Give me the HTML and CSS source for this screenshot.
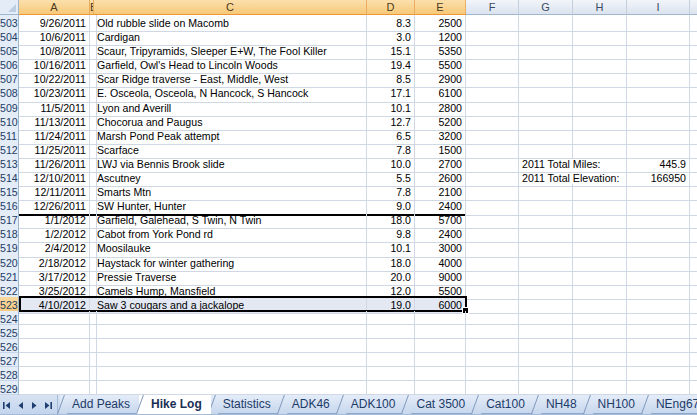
FILE: index.html
```html
<!DOCTYPE html>
<html>
<head>
<meta charset="utf-8">
<link rel="stylesheet" href="styles.css">
</head>
<body>
<div class="sheet">
  <div class="row hdr">
    <div class="c corner"><span class="tri"></span></div>
    <div class="c ch sel">A</div>
    <div class="c ch sel bh">B</div>
    <div class="c ch sel">C</div>
    <div class="c ch sel">D</div>
    <div class="c ch sel">E</div>
    <div class="c ch">F</div>
    <div class="c ch">G</div>
    <div class="c ch">H</div>
    <div class="c ch">I</div>
    <div class="c ch"></div>
  </div>

  <div class="row"><div class="c rh">503</div><div class="c r">9/26/2011</div><div class="c"></div><div class="c">Old rubble slide on Macomb</div><div class="c r">8.3</div><div class="c r">2500</div><div class="c"></div><div class="c"></div><div class="c"></div><div class="c"></div><div class="c"></div></div>
  <div class="row"><div class="c rh">504</div><div class="c r">10/6/2011</div><div class="c"></div><div class="c">Cardigan</div><div class="c r">3.0</div><div class="c r">1200</div><div class="c"></div><div class="c"></div><div class="c"></div><div class="c"></div><div class="c"></div></div>
  <div class="row"><div class="c rh">505</div><div class="c r">10/8/2011</div><div class="c"></div><div class="c">Scaur, Tripyramids, Sleeper E+W, The Fool Killer</div><div class="c r">15.1</div><div class="c r">5350</div><div class="c"></div><div class="c"></div><div class="c"></div><div class="c"></div><div class="c"></div></div>
  <div class="row"><div class="c rh">506</div><div class="c r">10/16/2011</div><div class="c"></div><div class="c">Garfield, Owl's Head to Lincoln Woods</div><div class="c r">19.4</div><div class="c r">5500</div><div class="c"></div><div class="c"></div><div class="c"></div><div class="c"></div><div class="c"></div></div>
  <div class="row"><div class="c rh">507</div><div class="c r">10/22/2011</div><div class="c"></div><div class="c">Scar Ridge traverse - East, Middle, West</div><div class="c r">8.5</div><div class="c r">2900</div><div class="c"></div><div class="c"></div><div class="c"></div><div class="c"></div><div class="c"></div></div>
  <div class="row tall"><div class="c rh">508</div><div class="c r">10/23/2011</div><div class="c"></div><div class="c">E. Osceola, Osceola, N Hancock, S Hancock</div><div class="c r">17.1</div><div class="c r">6100</div><div class="c"></div><div class="c"></div><div class="c"></div><div class="c"></div><div class="c"></div></div>
  <div class="row"><div class="c rh">509</div><div class="c r">11/5/2011</div><div class="c"></div><div class="c">Lyon and Averill</div><div class="c r">10.1</div><div class="c r">2800</div><div class="c"></div><div class="c"></div><div class="c"></div><div class="c"></div><div class="c"></div></div>
  <div class="row"><div class="c rh">510</div><div class="c r">11/13/2011</div><div class="c"></div><div class="c">Chocorua and Paugus</div><div class="c r">12.7</div><div class="c r">5200</div><div class="c"></div><div class="c"></div><div class="c"></div><div class="c"></div><div class="c"></div></div>
  <div class="row"><div class="c rh">511</div><div class="c r">11/24/2011</div><div class="c"></div><div class="c">Marsh Pond Peak attempt</div><div class="c r">6.5</div><div class="c r">3200</div><div class="c"></div><div class="c"></div><div class="c"></div><div class="c"></div><div class="c"></div></div>
  <div class="row"><div class="c rh">512</div><div class="c r">11/25/2011</div><div class="c"></div><div class="c">Scarface</div><div class="c r">7.8</div><div class="c r">1500</div><div class="c"></div><div class="c"></div><div class="c"></div><div class="c"></div><div class="c"></div></div>
  <div class="row"><div class="c rh">513</div><div class="c r">11/26/2011</div><div class="c"></div><div class="c">LWJ via Bennis Brook slide</div><div class="c r">10.0</div><div class="c r">2700</div><div class="c"></div><div class="c spill">2011 Total Miles:</div><div class="c"></div><div class="c r">445.9</div><div class="c"></div></div>
  <div class="row"><div class="c rh">514</div><div class="c r">12/10/2011</div><div class="c"></div><div class="c">Ascutney</div><div class="c r">5.5</div><div class="c r">2600</div><div class="c"></div><div class="c spill">2011 Total Elevation:</div><div class="c"></div><div class="c r">166950</div><div class="c"></div></div>
  <div class="row"><div class="c rh">515</div><div class="c r">12/11/2011</div><div class="c"></div><div class="c">Smarts Mtn</div><div class="c r">7.8</div><div class="c r">2100</div><div class="c"></div><div class="c"></div><div class="c"></div><div class="c"></div><div class="c"></div></div>
  <div class="row"><div class="c rh">516</div><div class="c r thick">12/26/2011</div><div class="c thick"></div><div class="c thick">SW Hunter, Hunter</div><div class="c r thick">9.0</div><div class="c r thick">2400</div><div class="c"></div><div class="c"></div><div class="c"></div><div class="c"></div><div class="c"></div></div>
  <div class="row"><div class="c rh">517</div><div class="c r">1/1/2012</div><div class="c"></div><div class="c">Garfield, Galehead, S Twin, N Twin</div><div class="c r">18.0</div><div class="c r">5700</div><div class="c"></div><div class="c"></div><div class="c"></div><div class="c"></div><div class="c"></div></div>
  <div class="row"><div class="c rh">518</div><div class="c r">1/2/2012</div><div class="c"></div><div class="c">Cabot from York Pond rd</div><div class="c r">9.8</div><div class="c r">2400</div><div class="c"></div><div class="c"></div><div class="c"></div><div class="c"></div><div class="c"></div></div>
  <div class="row tall"><div class="c rh">519</div><div class="c r">2/4/2012</div><div class="c"></div><div class="c">Moosilauke</div><div class="c r">10.1</div><div class="c r">3000</div><div class="c"></div><div class="c"></div><div class="c"></div><div class="c"></div><div class="c"></div></div>
  <div class="row"><div class="c rh">520</div><div class="c r">2/18/2012</div><div class="c"></div><div class="c">Haystack for winter gathering</div><div class="c r">18.0</div><div class="c r">4000</div><div class="c"></div><div class="c"></div><div class="c"></div><div class="c"></div><div class="c"></div></div>
  <div class="row"><div class="c rh">521</div><div class="c r">3/17/2012</div><div class="c"></div><div class="c">Pressie Traverse</div><div class="c r">20.0</div><div class="c r">9000</div><div class="c"></div><div class="c"></div><div class="c"></div><div class="c"></div><div class="c"></div></div>
  <div class="row"><div class="c rh">522</div><div class="c r">3/25/2012</div><div class="c"></div><div class="c">Camels Hump, Mansfield</div><div class="c r">12.0</div><div class="c r">5500</div><div class="c"></div><div class="c"></div><div class="c"></div><div class="c"></div><div class="c"></div></div>
  <div class="row active"><div class="c rh sel">523</div><div class="c r hl">4/10/2012</div><div class="c hl"></div><div class="c hl">Saw 3 cougars and a jackalope</div><div class="c r hl">19.0</div><div class="c r hl">6000</div><div class="c"></div><div class="c"></div><div class="c"></div><div class="c"></div><div class="c"></div><div class="selection"><span class="handle"></span></div></div>
  <div class="row"><div class="c rh">524</div><div class="c"></div><div class="c"></div><div class="c"></div><div class="c"></div><div class="c"></div><div class="c"></div><div class="c"></div><div class="c"></div><div class="c"></div><div class="c"></div></div>
  <div class="row"><div class="c rh">525</div><div class="c"></div><div class="c"></div><div class="c"></div><div class="c"></div><div class="c"></div><div class="c"></div><div class="c"></div><div class="c"></div><div class="c"></div><div class="c"></div></div>
  <div class="row"><div class="c rh">526</div><div class="c"></div><div class="c"></div><div class="c"></div><div class="c"></div><div class="c"></div><div class="c"></div><div class="c"></div><div class="c"></div><div class="c"></div><div class="c"></div></div>
  <div class="row"><div class="c rh">527</div><div class="c"></div><div class="c"></div><div class="c"></div><div class="c"></div><div class="c"></div><div class="c"></div><div class="c"></div><div class="c"></div><div class="c"></div><div class="c"></div></div>
  <div class="row"><div class="c rh">528</div><div class="c"></div><div class="c"></div><div class="c"></div><div class="c"></div><div class="c"></div><div class="c"></div><div class="c"></div><div class="c"></div><div class="c"></div><div class="c"></div></div>
  <div class="row"><div class="c rh">529</div><div class="c"></div><div class="c"></div><div class="c"></div><div class="c"></div><div class="c"></div><div class="c"></div><div class="c"></div><div class="c"></div><div class="c"></div><div class="c"></div></div>
</div>

<div class="tabbar">
  <div class="nav">
    <svg class="nb" width="8" height="7" viewBox="0 0 8 7"><rect x="0" y="0" width="1.6" height="7" fill="#1f3f72"/><path d="M7 0 L2.5 3.5 L7 7 Z" fill="#1f3f72"/></svg>
    <svg class="nb" width="6" height="7" viewBox="0 0 6 7"><path d="M5 0 L0.5 3.5 L5 7 Z" fill="#1f3f72"/></svg>
    <svg class="nb" width="6" height="7" viewBox="0 0 6 7"><path d="M1 0 L5.5 3.5 L1 7 Z" fill="#1f3f72"/></svg>
    <svg class="nb" width="8" height="7" viewBox="0 0 8 7"><path d="M1 0 L5.5 3.5 L1 7 Z" fill="#1f3f72"/><rect x="6.4" y="0" width="1.6" height="7" fill="#1f3f72"/></svg>
  </div>
  <div class="tabs">
    <div class="tab">Add Peaks</div>
    <div class="tab active">Hike Log</div>
    <div class="tab">Statistics</div>
    <div class="tab">ADK46</div>
    <div class="tab">ADK100</div>
    <div class="tab">Cat 3500</div>
    <div class="tab">Cat100</div>
    <div class="tab">NH48</div>
    <div class="tab">NH100</div>
    <div class="tab">NEng67</div>
  </div>
</div>
</body>
</html>
```
FILE: styles.css
```css
html, body {
  margin: 0;
  padding: 0;
}
body {
  width: 697px;
  height: 415px;
  overflow: hidden;
  background: #fff;
  font-family: "Liberation Sans", Arial, sans-serif;
  color: #000;
}
.sheet {
  display: flex;
  flex-direction: column;
}
.row {
  display: grid;
  grid-template-columns: 19px 71px 4px 273px 48px 51px 53px 54px 54px 63px 60px;
  height: 14px;
  position: relative;
}
.row.tall { height: 15px; }
.row.hdr { height: 15px; }
.c {
  box-sizing: border-box;
  border-right: 1px solid #d0d7e5;
  border-bottom: 1px solid #d0d7e5;
  font-size: 10.6px;
  line-height: 16px;
  padding: 0 3px;
  white-space: nowrap;
  min-width: 0;
}
.row.tall .c { line-height: 17px; }
.r { text-align: right; }
.rh {
  background: #e4ecf7;
  color: #233d66;
  text-align: right;
  padding: 0 1px 0 0;
  border-right: 1px solid #9eb6ce;
  border-bottom: 1px solid #c5d5ea;
  overflow: hidden;
}
.rh.sel {
  background: linear-gradient(#fad9a0, #f7c877);
  border-bottom-color: #f0b560;
}
.corner {
  background: #e4ecf7;
  border-right: 1px solid #9eb6ce;
  border-bottom: 1px solid #9eb6ce;
  position: relative;
}
.tri {
  position: absolute;
  right: 2px;
  bottom: 2px;
  width: 0;
  height: 0;
  border-left: 8px solid transparent;
  border-bottom: 8px solid #bccde3;
}
.ch {
  background: linear-gradient(#f2f5fa, #dbe3ee);
  color: #3b4b63;
  text-align: center;
  font-size: 11px;
  line-height: 15px;
  border-right: 1px solid #c2cfdf;
  border-bottom: 1px solid #9eb6ce;
  padding: 0;
  overflow: hidden;
}
.ch.sel {
  background: linear-gradient(#fbe0ad, #f7c978);
  color: #4a3a20;
  border-right-color: #e9ad5f;
  border-bottom-color: #f29536;
}
.bh {
  text-align: left;
}
.spill {
  border-right-color: transparent;
  padding-left: 3px;
}
.thick {
  border-bottom: 2px solid #000;
}
.hl {
  background: #e3e8f3;
}
.selection {
  position: absolute;
  left: 19px;
  top: -1px;
  width: 448px;
  height: 16px;
  box-sizing: border-box;
  border: 2px solid #000;
  pointer-events: none;
}
.handle {
  position: absolute;
  right: -4px;
  bottom: -4px;
  width: 5px;
  height: 5px;
  background: #000;
  border: 1px solid #fff;
}

.tabbar {
  height: 20px;
  display: flex;
  background: linear-gradient(#d7e3f3, #c2d4ec);
  border-bottom: 1px solid #a3bbd9;
  box-sizing: border-box;
  overflow: hidden;
}
.nav {
  width: 58px;
  flex: none;
  display: flex;
  align-items: center;
  gap: 7px;
  padding-left: 3px;
  box-sizing: border-box;
  border-right: 1px solid #a6bbd6;
}
.nb { display: block; margin-top: 2px; }
.tabs {
  display: flex;
  flex: 1;
  padding-left: 2px;
}
.tab {
  position: relative;
  font-size: 12px;
  line-height: 18px;
  height: 18px;
  color: #1d3b69;
  padding: 0 9px 0 12px;
  background: linear-gradient(#e4ecf8, #c7d7ed);
  white-space: nowrap;
  border-bottom: 1px solid #8ea8cc;
}
.tab::before {
  content: "";
  position: absolute;
  left: -3px;
  top: 0;
  bottom: -1px;
  width: 9px;
  background: linear-gradient(#e4ecf8, #c7d7ed);
  border-left: 1px solid #7f98bd;
  transform: skewX(-20deg);
  transform-origin: bottom left;
}
.tab.active {
  background: #fff;
  font-weight: bold;
  color: #1b2f55;
  z-index: 2;
  border-bottom-color: #fff;
}
.tab.active::before {
  background: #fff;
}
```
